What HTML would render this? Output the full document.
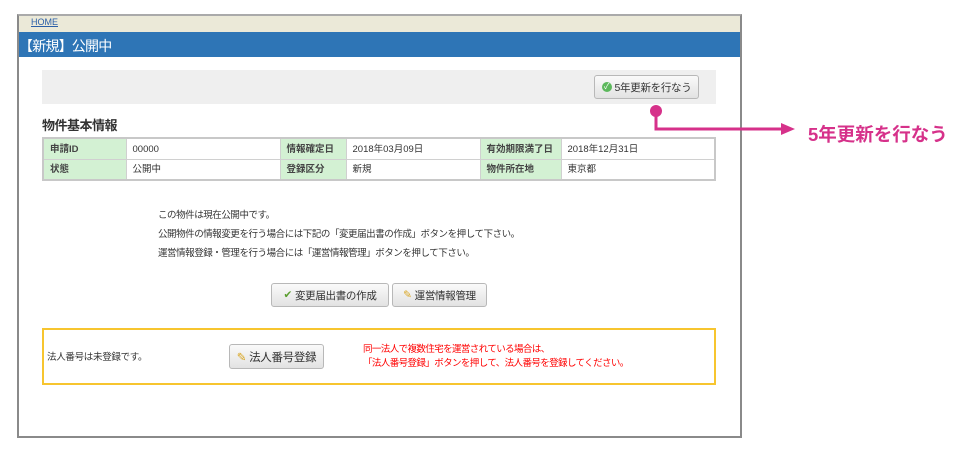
<!DOCTYPE html>
<html><head><meta charset="utf-8"><style>
*{margin:0;padding:0;box-sizing:border-box}
body{width:973px;height:449px;background:#fff;position:relative;overflow:hidden;font-family:"Liberation Sans","Noto Sans CJK JP",sans-serif;font-size:11px;color:#333}
.a{position:absolute;white-space:nowrap}
.frame{left:17px;top:14px;width:725px;height:424px;border:2px solid #8a8a8a;border-top-color:#aaa}
.btn{position:absolute;border:1px solid #b8b8b8;border-radius:3px;background:linear-gradient(#fafafa,#e2e2e2);font-size:10.5px;color:#333;display:flex;align-items:center;justify-content:center;gap:3px;letter-spacing:-0.3px}
table{position:absolute;left:42px;top:137px;width:674px;border-collapse:collapse;border:2px solid #c8c8c8;font-size:9.5px}
td{border:1px solid #d0d0d0;height:21px;padding-left:6px;padding-top:2px;vertical-align:middle;line-height:12px}
td.l{background:#d3f1d3;font-weight:bold;color:#444}
</style></head><body>
<div class="a frame"></div>
<div class="a" style="left:19px;top:16px;width:721px;height:16px;background:#ebe9d8"></div>
<div class="a" style="left:31px;top:17px;font-size:9px;color:#2b5fa8;text-decoration:underline">HOME</div>
<div class="a" style="left:19px;top:32px;width:721px;height:25px;background:#2e75b6"></div>
<div class="a" style="left:19px;top:36px;font-size:14px;color:#fff;letter-spacing:-0.8px">【新規】公開中</div>
<div class="a" style="left:42px;top:70px;width:674px;height:34px;background:#efefef"></div>
<div class="btn" style="left:594px;top:75px;width:105px;height:24px"><span style="display:inline-block;width:10px;height:10px;border-radius:50%;background:#5cb85c;color:#fff;font-size:8px;line-height:10px;text-align:center">✓</span>5年更新を行なう</div>
<div class="a" style="left:42px;top:115px;font-size:13px;font-weight:bold;color:#333;letter-spacing:-0.5px">物件基本情報</div>
<table><tr><td class="l" style="width:83px">申請ID</td><td style="width:154px">00000</td><td class="l" style="width:66px">情報確定日</td><td style="width:134px">2018年03月09日</td><td class="l" style="width:81px">有効期限満了日</td><td>2018年12月31日</td></tr>
<tr><td class="l">状態</td><td>公開中</td><td class="l">登録区分</td><td>新規</td><td class="l">物件所在地</td><td>東京都</td></tr></table>
<div class="a" style="left:158px;top:206px;font-size:9.5px;letter-spacing:-0.45px;line-height:19px">この物件は現在公開中です。<br>公開物件の情報変更を行う場合には下記の「変更届出書の作成」ボタンを押して下さい。<br>運営情報登録・管理を行う場合には「運営情報管理」ボタンを押して下さい。</div>
<div class="btn" style="left:271px;top:283px;width:118px;height:24px"><span style="color:#5a9e2f">✔</span> 変更届出書の作成</div>
<div class="btn" style="left:392px;top:283px;width:95px;height:24px"><span style="color:#d9a520">✎</span>運営情報管理</div>
<div class="a" style="left:42px;top:328px;width:674px;height:57px;border:2px solid #f7c52f"></div>
<div class="a" style="left:47px;top:349px;font-size:9.5px;letter-spacing:-0.3px">法人番号は未登録です。</div>
<div class="btn" style="left:229px;top:344px;width:95px;height:25px;font-size:11.5px"><span style="color:#d9a520">✎</span>法人番号登録</div>
<div class="a" style="left:363px;top:343px;font-size:9.5px;letter-spacing:-0.6px;line-height:14px;color:#f00">同一法人で複数住宅を運営されている場合は、<br>「法人番号登録」ボタンを押して、法人番号を登録してください。</div>
<svg class="a" style="left:0;top:0" width="973" height="449"><circle cx="656" cy="111" r="6" fill="#d6318a"/><path d="M656 111 V129 H783" stroke="#d6318a" stroke-width="3" fill="none"/><path d="M781 123 L795 129 L781 135 Z" fill="#d6318a"/></svg>
<div class="a" style="left:808px;top:121px;font-size:18.5px;font-weight:bold;color:#d6318a">5年更新を行なう</div>
</body></html>
